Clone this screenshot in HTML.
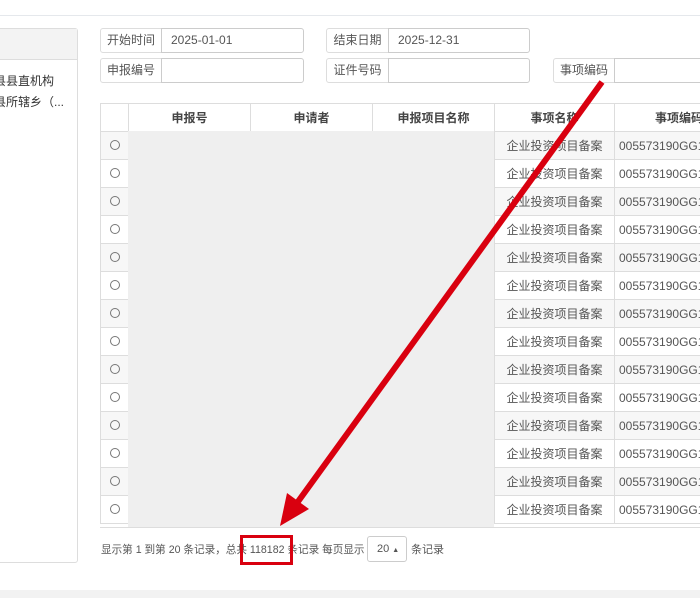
<!DOCTYPE html>
<html><head><meta charset="utf-8">
<style>
*{margin:0;padding:0;box-sizing:border-box}
body{width:700px;height:598px;overflow:hidden;background:#fff;font-family:"Liberation Sans","Noto Sans CJK SC",sans-serif;font-size:12px;color:#555;position:relative}
.a{position:absolute}
.lbl{position:absolute;border:1px solid #ddd;border-radius:3px 0 0 3px;background:#fff;color:#555;font-size:12px;text-align:center;line-height:23px;height:25px}
.inp{position:absolute;border:1px solid #ccc;border-radius:0 3px 3px 0;height:25px;line-height:23px;padding-left:9px;color:#555;font-size:12px}
table{border-collapse:collapse;position:absolute;left:100px;top:103px;table-layout:fixed;width:720px}
td,th{border:1px solid #ddd;height:28px;font-size:12px;white-space:nowrap;overflow:hidden;padding:0}
th{font-weight:bold;color:#444;text-align:center;background:#fff}
td.c{text-align:center}
td.e{padding-left:4px;text-align:left}
tr.g td{background:#f7f7f7}
.rad{display:inline-block;width:10px;height:10px;border:1px solid #777;border-radius:50%}
</style></head><body>
<div class="a" style="left:0;top:0;width:700px;height:16px;border-bottom:1px solid #e5e8ec"></div>
<div class="a" style="left:-5px;top:28px;width:83px;height:535px;border:1px solid #ddd;border-radius:3px"></div>
<div class="a" style="left:0;top:29px;width:77px;height:31px;background:#f3f3f3;border-bottom:1px solid #ddd"></div>
<div class="a" style="left:-6px;top:72px;font-size:12px;color:#333">县县直机构</div>
<div class="a" style="left:-6px;top:93px;font-size:12px;color:#333">县所辖乡（...</div>

<div class="lbl" style="left:100px;top:28px;width:62px">开始时间</div>
<div class="inp" style="left:161px;top:28px;width:143px">2025-01-01</div>
<div class="lbl" style="left:326px;top:28px;width:63px">结束日期</div>
<div class="inp" style="left:388px;top:28px;width:142px">2025-12-31</div>
<div class="lbl" style="left:100px;top:58px;width:62px">申报编号</div>
<div class="inp" style="left:161px;top:58px;width:143px"></div>
<div class="lbl" style="left:326px;top:58px;width:63px">证件号码</div>
<div class="inp" style="left:388px;top:58px;width:142px"></div>
<div class="lbl" style="left:553px;top:58px;width:62px">事项编码</div>
<div class="inp" style="left:614px;top:58px;width:100px"></div>

<table id="t">
<colgroup><col style="width:28px"><col style="width:122px"><col style="width:122px"><col style="width:122px"><col style="width:120px"><col style="width:206px"></colgroup>
<tr><th></th><th>申报号</th><th>申请者</th><th>申报项目名称</th><th>事项名称</th><th style="text-align:left;padding-left:40px">事项编码</th></tr>
</table>
<div class="a" style="left:128px;top:131px;width:366px;height:396px;background:#efefef"></div>
<div class="a" style="left:100px;top:527px;width:600px;height:1px;background:#ddd"></div>

<div class="a" style="left:101px;top:543px;font-size:10.6px;color:#555;line-height:14px;white-space:nowrap">显示第 1 到第 20 条记录，总共 118182 条记录 每页显示</div>
<div class="a" style="left:367px;top:536px;width:40px;height:26px;border:1px solid #ccc;border-radius:3px;font-size:11px;line-height:24px;padding-left:9px">20 <span style="font-size:7px">▲</span></div>
<div class="a" style="left:411px;top:543px;font-size:11px;line-height:14px">条记录</div>
<div class="a" style="left:240px;top:535px;width:53px;height:30px;border:3px solid #d9000f"></div>
<div class="a" style="left:0;top:590px;width:700px;height:8px;background:#f2f2f2"></div>

<svg class="a" style="left:0;top:0" width="700" height="598">
<line x1="602" y1="82" x2="297" y2="503" stroke="#d9000f" stroke-width="6"/>
<polygon points="280,526 287,493 309,509" fill="#d9000f"/>
</svg>
<script>
var t=document.getElementById('t');
for(var i=0;i<14;i++){var r=t.insertRow();if(i%2==0)r.className='g';
r.innerHTML='<td class="c"><span class="rad"></span></td><td></td><td></td><td></td><td class="c">企业投资项目备案</td><td class="e">005573190GG148</td>';}
</script>
</body></html>
